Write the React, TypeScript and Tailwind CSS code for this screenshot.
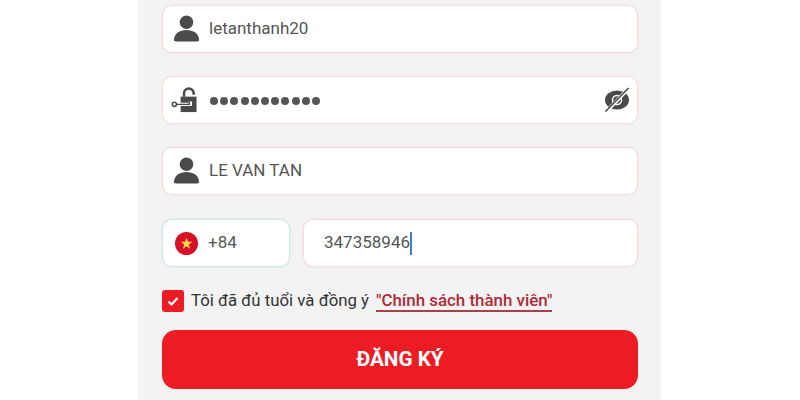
const fieldClass =
  "flex h-12 items-center rounded-[10px] border bg-white text-[17px] text-[#555]";
const pinkBorder = "border-[#f8dcdc] shadow-[0_0_2px_#f6d4d4]";
const passwordDots = [...Array(11).keys()];

function UserIcon() {
  return (
    <svg width="27" height="27" viewBox="0 0 28 28" fill="#4a4a4a" className="mb-0.5 shrink-0">
      <circle cx="14" cy="7.500" r="7" />
      <path d="M1 26c0-7 6-10.500 13-10.500S27 19 27 26c0 1-.8 1.500-2 1.500H3c-1.200 0-2-.5-2-1.500z" />
    </svg>
  );
}

function LockIcon() {
  return (
    <svg width="27" height="27" viewBox="0 0 28 28" className="shrink-0">
      <path d="M13.500 10V6.500a5 5 0 0 1 10 0V8" fill="none" stroke="#4a4a4a" strokeWidth="2.600" />
      <path d="M10 10h16.500v16H10z" fill="#4a4a4a" />
      <path d="M5 18h15v-3" fill="none" stroke="#fff" strokeWidth="3.500" />
      <path d="M5.500 18H19v-3" fill="none" stroke="#4a4a4a" strokeWidth="1.500" />
      <circle cx="3.500" cy="18" r="2.200" fill="#fff" stroke="#4a4a4a" strokeWidth="1.500" />
    </svg>
  );
}

function EyeOffIcon() {
  return (
    <svg width="26" height="26" viewBox="0 0 26 26" className="shrink-0">
      <ellipse cx="13" cy="13" rx="12" ry="9.500" fill="#4a4a4a" />
      <circle cx="13" cy="13" r="4.500" fill="none" stroke="#fff" strokeWidth="1.500" />
      <path d="M2 25 24.500 1.500" stroke="#fff" strokeWidth="3.500" />
      <path d="M1.500 24.500 24.500 1" stroke="#4a4a4a" strokeWidth="1.600" />
    </svg>
  );
}

function VietnamFlag() {
  return (
    <svg width="23" height="23" viewBox="0 0 24 24" className="shrink-0">
      <circle cx="12" cy="12" r="12" fill="#d80f27" />
      <path d="m12 6 1.500 4.300h4.500l-3.600 2.700 1.300 4.400-3.700-2.600-3.700 2.600 1.300-4.400L6 10.300h4.500z" fill="#ffda44" />
    </svg>
  );
}

export default function App() {
  return (
    <div className="h-[400px] w-[800px] overflow-hidden bg-white font-['Roboto',sans-serif]">
      <div className="mx-[138px] flex h-full w-[523px] flex-col bg-[#f3f3f3] pl-6 pr-[23px] pt-[5px]">
        <div className={`${fieldClass} ${pinkBorder} mb-[23px] pl-[10px]`}>
          <UserIcon />
          <span className="ml-[9px]">letanthanh20</span>
        </div>

        <div className={`${fieldClass} ${pinkBorder} mb-[23px] pl-2 pr-[7px]`}>
          <LockIcon />
          <div className="ml-[12px] mt-0.5 flex flex-1 gap-[2.200px]">
            {passwordDots.map((dot) => (
              <span key={dot} className="h-2 w-2 rounded-full bg-[#555]" />
            ))}
          </div>
          <EyeOffIcon />
        </div>

        <div className={`${fieldClass} ${pinkBorder} mb-6 pl-[10px]`}>
          <UserIcon />
          <span className="ml-[9px]">LE VAN TAN</span>
        </div>

        <div className="flex gap-[13px]">
          <div className={`${fieldClass} w-[128px] border-[#cfe6ec] pl-3 shadow-[0_0_2px_#c4e0e8]`}>
            <VietnamFlag />
            <span className="ml-[10px]">+84</span>
          </div>
          <div className={`${fieldClass} ${pinkBorder} flex-1 pl-5`}>
            <span>347358946</span>
            <span className="h-[23px] w-0.5 bg-[#3f7fd0]" />
          </div>
        </div>

        <div className="mt-[21px] flex items-center">
          <span className="flex h-[22px] w-[22px] items-center justify-center rounded-[3px] bg-[#ed1c24]">
            <svg width="14" height="14" viewBox="0 0 14 14" fill="none" stroke="#fff" strokeWidth="2.200">
              <path d="m2.500 7.500 3 3 6-6.500" />
            </svg>
          </span>
          <span className="ml-[7px] text-[16.800px] text-[#333]">Tôi đã đủ tuổi và đồng ý</span>
          <span className="ml-[7px] border-b-2 border-[#a8404c] text-[16.900px] font-medium leading-[20px] text-[#b02a36]">
            "Chính sách thành viên"
          </span>
        </div>

        <button
          type="button"
          className="mt-[17px] h-[59px] w-full rounded-[14px] bg-[#ed1c24] text-[20.700px] font-bold text-white"
        >
          ĐĂNG KÝ
        </button>
      </div>
    </div>
  );
}
